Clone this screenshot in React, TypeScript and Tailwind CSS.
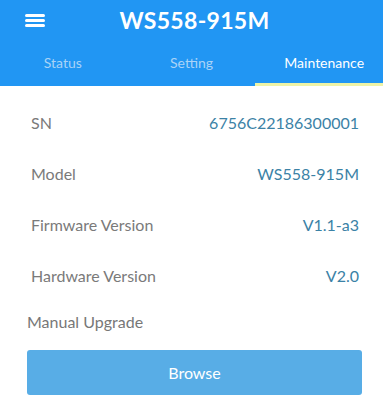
import React from 'react';

const rows = [
    { label: 'SN', value: '6756C22186300001' },
    { label: 'Model', value: 'WS558-915M' },
    { label: 'Firmware Version', value: 'V1.1-a3' },
    { label: 'Hardware Version', value: 'V2.0' },
];

const tabs = ['Status', 'Setting', 'Maintenance'];

export default function App() {
    return (
        <div className="w-[383px] h-[405px] bg-white overflow-hidden" style={{ fontFamily: 'Lato, "Open Sans", sans-serif' }}>
            {/* Header */}
            <div className="bg-[#2196f3]">
                <div className="relative h-[42px] flex items-center justify-center">
                    <div className="absolute left-[25px] top-[14px] w-[20px] h-[13px] flex flex-col justify-between">
                        <span className="block h-[3px] bg-white rounded-sm" />
                        <span className="block h-[3px] bg-white rounded-sm" />
                        <span className="block h-[3px] bg-white rounded-sm" />
                    </div>
                    <h1 className="text-white text-[23px] font-bold tracking-[0.3px] pl-[6px] mt-[-1px]">WS558-915M</h1>
                </div>
                <div className="flex h-[44px]">
                    {tabs.map((t, i) => (
                        <div key={t} className="flex-1 flex flex-col">
                            <div
                                className={`flex-1 flex items-center justify-center text-[14px] ${i === 2 ? 'text-white pl-[10px]' : 'text-[#a9d3f7]'} ${i === 0 ? 'pr-[2px]' : ''}`}
                            >
                                {t}
                            </div>
                            <div className={`h-[3px] ${i === 2 ? 'bg-[#eef3a6]' : ''}`} />
                        </div>
                    ))}
                </div>
            </div>

            {/* Info rows */}
            <div className="pt-[11px]">
                {rows.map(r => (
                    <div key={r.label} className="flex justify-between items-center h-[51px] pl-[31px] pr-[24px]">
                        <span className="text-[16px] text-[#7a7a7a]">{r.label}</span>
                        <span className="text-[16px] text-[#3b82a6]">{r.value}</span>
                    </div>
                ))}
            </div>

            <div className="pl-[27px] pt-[9px] text-[16px] text-[#777]">Manual Upgrade</div>

            <div className="px-[27px] pt-[16px] pr-[21px]">
                <button className="w-full h-[45px] bg-[#58ade6] rounded-[3px] text-white text-[16px]">Browse</button>
            </div>
        </div>
    );
}
